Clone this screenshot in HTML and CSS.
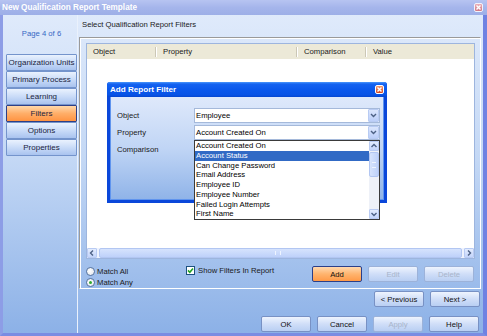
FILE: index.html
```html
<!DOCTYPE html>
<html>
<head>
<meta charset="utf-8">
<title>New Qualification Report Template</title>
<link rel="stylesheet" href="styles.css">
</head>
<body>
<div class="window">
  <div class="titlebar">
    <span class="title">New Qualification Report Template</span>
    <span class="xbtn xbtn-inactive"><svg width="7" height="7" viewBox="0 0 7 7"><path d="M1.5 1.5L5.5 5.5M5.5 1.5L1.5 5.5" stroke="#fff" stroke-width="1.4" fill="none"/></svg></span>
  </div>
  <div class="frame">
    <div class="sidebar">
      <div class="page-no">Page 4 of 6</div>
      <div class="nav">
        <div class="nav-btn">Organization Units</div>
        <div class="nav-btn">Primary Process</div>
        <div class="nav-btn">Learning</div>
        <div class="nav-btn nav-active">Filters</div>
        <div class="nav-btn">Options</div>
        <div class="nav-btn">Properties</div>
      </div>
    </div>
    <div class="main">
      <div class="heading">Select Qualification Report Filters</div>
      <div class="panel">
        <div class="listview">
          <div class="lv-header">
            <div class="col col1">Object</div>
            <div class="col col2"><span class="sep"></span>Property</div>
            <div class="col col3"><span class="sep"></span>Comparison</div>
            <div class="col col4"><span class="sep"></span>Value</div>
          </div>
          <div class="lv-body"></div>
          <div class="hscroll">
            <span class="sbtn"><svg width="8" height="8" viewBox="0 0 8 8"><polyline points="5,1.5 2.5,4 5,6.5" fill="none" stroke="#4d6185" stroke-width="1.4"/></svg></span>
            <span class="hthumb"><span class="hgrip"></span></span>
            <span class="sbtn"><svg width="8" height="8" viewBox="0 0 8 8"><polyline points="3,1.5 5.5,4 3,6.5" fill="none" stroke="#4d6185" stroke-width="1.4"/></svg></span>
          </div>
        </div>
        <div class="panel-foot">
          <div class="radios">
            <div class="radio-row"><span class="radio"></span><span>Match All</span></div>
            <div class="radio-row"><span class="radio radio-on"><span class="dot"></span></span><span>Match Any</span></div>
          </div>
          <div class="check">
            <span class="cbox"><svg width="7" height="7" viewBox="0 0 7 7"><polyline points="1,3.4 2.8,5.3 6,1.4" fill="none" stroke="#21a121" stroke-width="1.6"/></svg></span>
            <span>Show Filters In Report</span>
          </div>
          <div class="btns">
            <div class="btn btn-hot">Add</div>
            <div class="btn btn-off">Edit</div>
            <div class="btn btn-off">Delete</div>
          </div>
        </div>
      </div>
      <div class="nav-row">
        <div class="btn">&lt; Previous</div>
        <div class="btn">Next &gt;</div>
      </div>
      <div class="action-row">
        <div class="btn">OK</div>
        <div class="btn">Cancel</div>
        <div class="btn btn-off">Apply</div>
        <div class="btn">Help</div>
      </div>
    </div>
  </div>

  <div class="dialog">
    <div class="dlg-title">
      <span class="title">Add Report Filter</span>
      <span class="xbtn xbtn-active"><svg width="7" height="7" viewBox="0 0 7 7"><path d="M1.5 1.5L5.5 5.5M5.5 1.5L1.5 5.5" stroke="#fff" stroke-width="1.4" fill="none"/></svg></span>
    </div>
    <div class="dlg-body">
      <div class="field">
        <span class="flabel">Object</span>
        <div class="combo"><span class="ctext">Employee</span><span class="cbtn"><svg width="9" height="9" viewBox="0 0 9 9"><polyline points="2,3 4.5,5.5 7,3" fill="none" stroke="#4d6185" stroke-width="1.4"/></svg></span></div>
      </div>
      <div class="field">
        <span class="flabel">Property</span>
        <div class="combo"><span class="ctext">Account Created On</span><span class="cbtn"><svg width="9" height="9" viewBox="0 0 9 9"><polyline points="2,3 4.5,5.5 7,3" fill="none" stroke="#4d6185" stroke-width="1.4"/></svg></span></div>
      </div>
      <div class="field">
        <span class="flabel">Comparison</span>
        <div class="combo"><span class="ctext"></span><span class="cbtn"></span></div>
      </div>
    </div>
    <div class="droplist">
      <div class="items">
        <div class="item">Account Created On</div>
        <div class="item item-sel">Account Status</div>
        <div class="item">Can Change Password</div>
        <div class="item">Email Address</div>
        <div class="item">Employee ID</div>
        <div class="item">Employee Number</div>
        <div class="item">Failed Login Attempts</div>
        <div class="item">First Name</div>
      </div>
      <div class="vscroll">
        <span class="sbtn"><svg width="8" height="8" viewBox="0 0 8 8"><polyline points="1.5,5 4,2.5 6.5,5" fill="none" stroke="#4d6185" stroke-width="1.4"/></svg></span>
        <span class="vthumb"><span class="vgrip"></span></span>
        <span class="vtrack"></span>
        <span class="sbtn"><svg width="8" height="8" viewBox="0 0 8 8"><polyline points="1.5,3 4,5.5 6.5,3" fill="none" stroke="#4d6185" stroke-width="1.4"/></svg></span>
      </div>
    </div>
  </div>
</div>
</body>
</html>
```

FILE: styles.css
```css
* { box-sizing: border-box; }
html, body { margin: 0; padding: 0; }
body {
  width: 487px;
  height: 336px;
  overflow: hidden;
  font-family: "Liberation Sans", Arial, sans-serif;
  font-size: 7.7px;
  color: #000;
  background: #fff;
}
.window {
  position: relative;
  width: 487px;
  height: 336px;
  display: flex;
  flex-direction: column;
}
.titlebar {
  height: 15px;
  flex: none;
  display: flex;
  align-items: center;
  padding: 0 4px 0 2px;
  background: linear-gradient(#b7c4f1, #a5b5eb 50%, #9dafe7);
  color: #fff;
  font-weight: bold;
  font-size: 8.2px;
}
.title { flex: 1; white-space: nowrap; }
.xbtn {
  width: 9px;
  height: 9px;
  border-radius: 2px;
  display: flex;
  align-items: center;
  justify-content: center;
  flex: none;
}
.xbtn-inactive {
  background: linear-gradient(#eab0b8, #cf7684);
  border: 1px solid #f3f3fb;
}
.xbtn-active {
  background: linear-gradient(#f49a72, #d6461c);
  border: 1px solid #fff;
}
.frame {
  flex: 1;
  display: flex;
  border-left: 3px solid #8d9de6;
  border-right: 4px solid #6f82e2;
  border-bottom: 3px solid #7a8ce2;
  background: linear-gradient(#dfeafb, #c4d8f5 45%, #8cb1e7);
}
.sidebar {
  width: 75px;
  flex: none;
  border-right: 1px solid #eaf1fc;
  padding-left: 3px;
}
.page-no {
  margin-top: 14px;
  height: 10px;
  line-height: 10px;
  text-align: center;
  color: #3567c4;
}
.nav { margin-top: 15px; width: 71px; }
.nav-btn {
  height: 17px;
  border: 1px solid #7494cc;
  border-radius: 1px;
  background: linear-gradient(#eaf2fe, #c6d9f7 55%, #a9c3ef);
  text-align: center;
  line-height: 15px;
  font-size: 8px;
  color: #1b2440;
  white-space: nowrap;
}
.nav-active {
  background: linear-gradient(#ffd8aa, #ffae68 50%, #ff9442);
  border-color: #2e3f86;
}
.main {
  flex: 1;
  display: flex;
  flex-direction: column;
}
.heading {
  height: 22px;
  padding: 5px 0 0 4px;
  line-height: 10px;
  color: #1a1a1a;
}
.panel {
  height: 252px;
  margin: 0 2px 0 1px;
  border: 1px solid;
  border-color: #9a9a9a #fff #fff #9a9a9a;
  box-shadow: inset 1px 1px 0 #fff;
  padding: 5px 5px 0 6px;
  display: flex;
  flex-direction: column;
}
.listview {
  height: 216px;
  flex: none;
  border: 1px solid #9db5de;
  background: #fff;
  display: flex;
  flex-direction: column;
}
.lv-header {
  height: 15px;
  flex: none;
  background: #ece9d8;
  display: flex;
  align-items: center;
  color: #1a1a1a;
}
.col {
  display: flex;
  align-items: center;
  height: 100%;
  white-space: nowrap;
}
.col1 { width: 68px; padding-left: 6px; }
.col2 { width: 141px; }
.col3 { width: 69px; }
.col4 { flex: 1; }
.sep {
  width: 2px;
  height: 10px;
  border-left: 1px solid #cbc7b6;
  border-right: 1px solid #fff;
  margin-right: 6px;
}
.lv-body { flex: 1; }
.hscroll {
  height: 10px;
  flex: none;
  display: flex;
  align-items: center;
  background: #eef3fe;
}
.sbtn {
  width: 10px;
  height: 10px;
  flex: none;
  display: flex;
  align-items: center;
  justify-content: center;
  border: 1px solid #b9cbf3;
  border-radius: 1px;
  background: linear-gradient(#e3ecfe, #c4d5fb);
}
.hthumb {
  flex: 1;
  height: 10px;
  margin: 0 2px;
  border: 1px solid #b2c6f2;
  border-radius: 2px;
  background: linear-gradient(#d6e3fd, #bed1fa);
  display: flex;
  align-items: center;
  justify-content: center;
}
.hgrip {
  width: 6px;
  height: 4px;
  border-left: 1px solid #eef4ff;
  border-right: 1px solid #eef4ff;
  margin-left: -6px;
}
.panel-foot {
  height: 29px;
  flex: none;
  display: flex;
  align-items: flex-start;
  padding-top: 7px;
  padding-right: 1px;
}
.radios { width: 100px; flex: none; }
.radio-row {
  height: 11px;
  display: flex;
  align-items: center;
  gap: 2px;
  color: #1a1a1a;
}
.radio {
  width: 9px;
  height: 9px;
  border-radius: 50%;
  border: 1px solid #56739f;
  background: radial-gradient(circle at 40% 40%, #fff, #dfe4ea);
  display: flex;
  align-items: center;
  justify-content: center;
}
.dot {
  width: 3px;
  height: 3px;
  border-radius: 50%;
  background: #2fa92f;
}
.check {
  display: flex;
  align-items: center;
  gap: 3px;
  height: 9px;
  color: #1a1a1a;
  white-space: nowrap;
}
.cbox {
  width: 9px;
  height: 9px;
  border: 1px solid #1c5180;
  background: #fff;
  display: flex;
  align-items: center;
  justify-content: center;
}
.btns {
  margin-left: auto;
  display: flex;
  gap: 6px;
}
.btn {
  width: 50px;
  height: 16px;
  flex: none;
  border: 1px solid #7891c4;
  border-radius: 2px;
  background: linear-gradient(#eef4fe, #d0def8 50%, #b9cff3);
  display: flex;
  align-items: center;
  justify-content: center;
  color: #111;
  white-space: nowrap;
}
.btn-off {
  color: #a7b4ca;
  border-color: #9cb2d9;
}
.btn-hot {
  background: linear-gradient(#ffd9b0, #ffb46e 50%, #ff9a48);
  border-color: #2a3f8a;
}
.nav-row {
  display: flex;
  justify-content: flex-end;
  gap: 6px;
  margin-top: 2px;
  padding-right: 3px;
}
.action-row {
  display: flex;
  justify-content: flex-end;
  gap: 6px;
  margin-top: 9px;
  padding-right: 4px;
}

/* dialog */
.dialog {
  position: absolute;
  left: 107px;
  top: 82px;
  width: 280px;
  height: 121px;
  background: #0a47da;
  display: flex;
  flex-direction: column;
  border-radius: 3px 3px 0 0;
}
.dlg-title {
  height: 15px;
  flex: none;
  display: flex;
  align-items: center;
  padding: 0 3px 0 3px;
  background: linear-gradient(#4a97fb 0%, #1462f0 14%, #0a58ec 50%, #0753e6 86%, #0646cf 100%);
  color: #fff;
  font-weight: bold;
  font-size: 8.1px;
  border-radius: 3px 3px 0 0;
}
.dlg-body {
  flex: 1;
  margin: 0 3px 3px 3px;
  background: linear-gradient(#dfe9fb, #c0d5f5 50%, #8fb3e8);
  box-shadow: inset 1px 0 0 #5f94ee, inset -1px 0 0 #5f94ee, inset 0 -1px 0 #5f94ee;
  padding: 11px 4px 0 7px;
}
.field {
  display: flex;
  align-items: center;
  height: 15px;
  margin-bottom: 2px;
}
.flabel { width: 77px; flex: none; color: #1a1a1a; }
.combo {
  width: 186px;
  height: 15px;
  border: 1px solid #a5b9da;
  background: #fff;
  display: flex;
  align-items: center;
  padding: 0 0 0 1px;
}
.ctext { flex: 1; white-space: nowrap; }
.cbtn {
  width: 11px;
  height: 13px;
  flex: none;
  border: 1px solid #b8cbf3;
  border-radius: 1px;
  background: linear-gradient(#dbe6fd, #bccff9);
  display: flex;
  align-items: center;
  justify-content: center;
}
.droplist {
  position: absolute;
  left: 87px;
  top: 58px;
  width: 186px;
  height: 80px;
  border: 1px solid #3a3a3a;
  background: #fff;
  display: flex;
}
.items { flex: 1; }
.item {
  height: 9.75px;
  line-height: 9.75px;
  padding-left: 1px;
  white-space: nowrap;
}
.item-sel { background: #316ac5; color: #fff; }
.vscroll {
  width: 10px;
  flex: none;
  display: flex;
  flex-direction: column;
  background: #eef1f8;
}
.vthumb {
  height: 25px;
  flex: none;
  margin-top: 1px;
  border: 1px solid #b2c6f2;
  border-radius: 2px;
  background: linear-gradient(90deg, #d6e3fd, #bed1fa);
  display: flex;
  align-items: center;
  justify-content: center;
}
.vgrip {
  width: 4px;
  height: 6px;
  border-top: 1px solid #eef4ff;
  border-bottom: 1px solid #eef4ff;
}
.vtrack { flex: 1; }
```
